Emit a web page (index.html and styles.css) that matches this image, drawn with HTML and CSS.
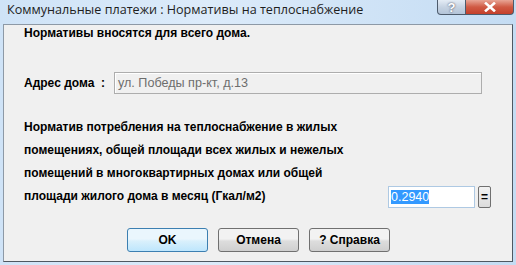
FILE: index.html
```html
<!DOCTYPE html>
<html lang="ru">
<head>
    <meta charset="UTF-8">
    <title>Коммунальные платежи : Нормативы на теплоснабжение</title>
    <link rel="stylesheet" href="styles.css">
</head>
<body>
    <div class="window">
        <div class="titlebar">
            <span class="title">Коммунальные платежи : Нормативы на теплоснабжение</span>
            <div class="caption-buttons">
                <div class="cap-btn cap-help">?</div>
                <div class="cap-btn cap-close">
                    <svg width="14" height="10" viewBox="0 0 14 10">
                        <path d="M3 1.5 L11 8.5 M11 1.5 L3 8.5" stroke="#fff" stroke-width="2.6" stroke-linecap="square"/>
                    </svg>
                </div>
            </div>
        </div>
        <div class="client">
            <div class="note">Нормативы вносятся для всего дома.</div>

            <div class="address-row">
                <label class="address-label">Адрес дома&nbsp;&nbsp;:</label>
                <div class="address-box">ул. Победы пр-кт, д.13</div>
            </div>

            <div class="norm-row">
                <div class="norm-text">
                    Норматив потребления на теплоснабжение в жилых<br>
                    помещениях, общей площади всех жилых и нежелых<br>
                    помещений в многоквартирных домах или общей<br>
                    площади жилого дома в месяц (Гкал/м2)
                </div>
                <div class="value-box"><span class="selected">0.2940</span></div>
                <div class="calc-btn">=</div>
            </div>

            <div class="buttons">
                <div class="btn btn-default">OK</div>
                <div class="btn">Отмена</div>
                <div class="btn">? Справка</div>
            </div>
        </div>
    </div>
</body>
</html>
```

FILE: styles.css
```css
/* Окно диалога */
body {
    margin: 0;
    padding: 0;
    background-color: #fff;
}

.window {
    width: 516px;
    height: 265px;
    background: linear-gradient(to right, #cfe3f7, #dcebfa 40%, #c4dcf3);
    font-family: "Liberation Sans", Arial, sans-serif;
    overflow: hidden;
}

/* Заголовок */
.titlebar {
    height: 24px;
    display: flex;
    justify-content: space-between;
    align-items: flex-start;
}

.title {
    font-family: "Open Sans", "Noto Sans", sans-serif;
    font-size: 12.6px;
    color: #1e1e1e;
    margin: 1px 0 0 7px;
}

.caption-buttons {
    display: flex;
    margin-right: 2px;
}

.cap-btn {
    height: 14px;
    border: 1px solid #4d5b6c;
    border-top: none;
    display: flex;
    align-items: center;
    justify-content: center;
}

.cap-help {
    width: 27px;
    border-radius: 0 0 0 4px;
    background: linear-gradient(#e4ecf5, #c6d3e2 50%, #b3c4d8);
    color: #fff;
    font-weight: bold;
    font-size: 13px;
    text-shadow: 0 0 2px #334;
}

.cap-close {
    width: 47px;
    border-left: none;
    border-radius: 0 0 4px 0;
    background: linear-gradient(#e8a595, #d05a44 50%, #c4402b);
}

/* Клиентская область */
.client {
    margin: 0 3px;
    height: 236px;
    background-color: #f0f0f0;
    border-top: 1px solid #8d99a6;
    border-left: 1px solid #8d99a6;
    border-right: 1px solid #4e5862;
    border-bottom: 1px solid #4e5862;
    padding-left: 20px;
    font-size: 12px;
    font-weight: bold;
    color: #000;
}

.note {
    margin-top: 0;
    line-height: 16px;
}

.address-row {
    display: flex;
    align-items: center;
    margin-top: 31px;
}

.address-label {
    width: 90px;
}

.address-box {
    width: 363px;
    height: 20px;
    border: 1px solid #adadad;
    box-shadow: inset 1px 1px 0 #fff;
    display: flex;
    align-items: center;
    padding-left: 3px;
    font-weight: normal;
    font-size: 12.6px;
    color: #6d6d6d;
}

.norm-row {
    display: flex;
    align-items: flex-end;
    margin-top: 22px;
}

.norm-text {
    width: 364px;
    line-height: 23px;
}

.value-box {
    width: 83px;
    height: 20px;
    border: 1px solid #aec9e3;
    background-color: #fff;
    display: flex;
    align-items: center;
    padding-left: 2px;
    margin-bottom: 0;
    font-weight: normal;
    font-size: 12.5px;
}

.selected {
    background-color: #3399ff;
    color: #fff;
    line-height: 14px;
}

.calc-btn {
    width: 11px;
    height: 20px;
    margin: 0 0 0 3px;
    border: 1px solid #707070;
    border-radius: 2px;
    background: linear-gradient(#f2f2f2, #dcdcdc);
    display: flex;
    align-items: center;
    justify-content: center;
    font-size: 12px;
}

/* Кнопки */
.buttons {
    display: flex;
    gap: 10px;
    margin: 20px 0 0 103px;
}

.btn {
    width: 79px;
    height: 22px;
    border: 1px solid #707070;
    border-radius: 3px;
    background: linear-gradient(#f2f2f2 45%, #dddddd 55%, #cfcfcf);
    display: flex;
    align-items: center;
    justify-content: center;
    font-size: 12px;
}

.btn-default {
    border-color: #3c7fb1;
    background: linear-gradient(#eaf6fd 45%, #d9f0fc 55%, #bee6fd);
}
```
